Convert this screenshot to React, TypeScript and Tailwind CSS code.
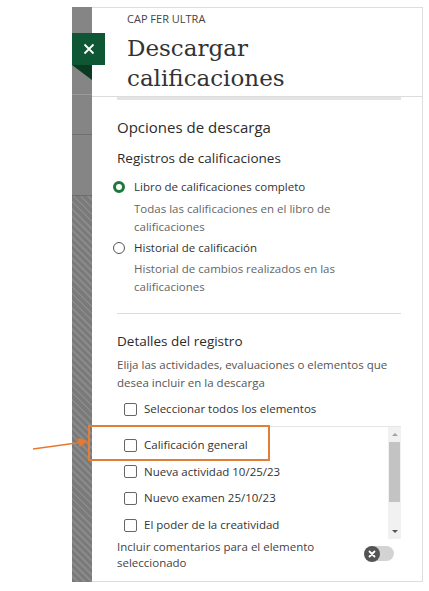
import React from 'react';

const items = [
  'Calificación general',
  'Nueva actividad 10/25/23',
  'Nuevo examen 25/10/23',
  'El poder de la creatividad',
];

function Radio({ checked }: { checked?: boolean }) {
  if (checked) {
    return <span className="block w-[12px] h-[12px] rounded-full border-[3.5px] border-[#1a7a3c] bg-white shrink-0" />;
  }
  return <span className="block w-[12px] h-[12px] rounded-full border-[1.5px] border-[#555] bg-white shrink-0" />;
}

function Checkbox() {
  return <span className="block w-[13px] h-[13px] rounded-[2px] border-[1.5px] border-[#666] bg-white shrink-0" />;
}

export default function App() {
  return (
    <div className="relative w-[429px] h-[591px] bg-white font-['Open_Sans',sans-serif] text-[#333]">
      <div className="flex pt-[7px] pl-[72px] pr-[6px] h-[582px]">
        {/* background strip of the page behind the panel */}
        <div className="w-[20px] flex flex-col bg-[#858585]">
          <div className="h-[88px] border-b border-[#9a9a9a]" />
          <div className="h-[40px] border-b border-[#6f6f6f]" />
          <div className="h-[61px] border-b border-[#6c6c6c]" />
          <div className="flex-1 bg-[repeating-linear-gradient(45deg,#7a7a7a_0,#7a7a7a_3px,#8a8a8a_3px,#8a8a8a_5px)]" />
        </div>

        <div className="flex-1 flex flex-col border-t border-r border-b border-[#dedede] bg-white">
          <div className="pl-[35px] pt-[4px] pb-[3px] border-b border-[#dcdcdc]">
            <div className="text-[11px] leading-[14px] text-[#444] uppercase">CAP FER ULTRA</div>
            <h1 className="mt-[7px] font-['DejaVu_Serif',serif] text-[23px] leading-[30px] text-[#333]">
              Descargar
              <br />
              calificaciones
            </h1>
          </div>
          <div className="ml-[25px] mr-[21px] h-[3px] bg-[#e4e4e4]" />

          <div className="pl-[25px] pr-[21px]">
            <h2 className="mt-[16px] text-[15px] leading-[22px] text-[#2b2b2b]">Opciones de descarga</h2>
            <h3 className="mt-[10px] text-[13.5px] leading-[20px] text-[#2b2b2b]">Registros de calificaciones</h3>

            <div className="mt-[10px] flex items-center gap-[9px] -ml-[4px]">
              <Radio checked />
              <span className="text-[11.5px] leading-[18px] text-[#333]">Libro de calificaciones completo</span>
            </div>
            <p className="mt-[4px] pl-[17px] text-[11.5px] leading-[18px] text-[#666] pr-[40px]">
              Todas las calificaciones en el libro de calificaciones
            </p>
            <div className="mt-[3px] flex items-center gap-[9px] -ml-[4px]">
              <Radio />
              <span className="text-[11.5px] leading-[18px] text-[#333]">Historial de calificación</span>
            </div>
            <p className="mt-[3px] pl-[17px] text-[11.5px] leading-[18px] text-[#666] pr-[40px]">
              Historial de cambios realizados en las calificaciones
            </p>

            <div className="mt-[17px] h-px bg-[#dcdcdc]" />

            <h3 className="mt-[17px] text-[13.5px] leading-[20px] text-[#2b2b2b]">Detalles del registro</h3>
            <p className="mt-[5px] text-[11.5px] leading-[18px] text-[#555]">
              Elija las actividades, evaluaciones o elementos que desea incluir en la descarga
            </p>
            <div className="mt-[8px] pl-[7px] flex items-center gap-[7px]">
              <Checkbox />
              <span className="text-[11.5px] leading-[18px] text-[#333]">Seleccionar todos los elementos</span>
            </div>

            <div className="mt-[8px] flex h-[113px] border-t border-[#e6e6e6]">
              <div className="flex-1 pt-[5px] overflow-hidden">
                {items.map((t) => (
                  <div key={t} className="h-[26.6px] pl-[7px] flex items-center gap-[7px]">
                    <Checkbox />
                    <span className="text-[11.5px] leading-[18px] text-[#333]">{t}</span>
                  </div>
                ))}
              </div>
              <div className="w-[13px] bg-[#f1f1f1] flex flex-col items-center pt-[6px] pb-[6px]">
                <span className="block w-0 h-0 border-l-[3px] border-r-[3px] border-b-[3px] border-l-transparent border-r-transparent border-b-[#a3a3a3]" />
                <div className="mt-[6px] w-[11px] h-[60px] bg-[#c3c3c3]" />
                <div className="flex-1" />
                <span className="block w-0 h-0 border-l-[3px] border-r-[3px] border-t-[3px] border-l-transparent border-r-transparent border-t-[#555]" />
              </div>
            </div>

            <div className="flex items-start justify-between">
              <p className="w-[215px] text-[11.5px] leading-[16px] text-[#444]">
                Incluir comentarios para el elemento seleccionado
              </p>
              <div className="mt-[7px] mr-[7px] relative w-[29px] h-[15px] rounded-full bg-[#d3d3d3]">
                <span className="absolute -left-[1px] -top-[0.5px] w-[16px] h-[16px] rounded-full bg-[#545454] flex items-center justify-center">
                  <svg width="8" height="8" viewBox="0 0 8 8">
                    <path d="M1.5 1.5l5 5M6.5 1.5l-5 5" stroke="#fff" strokeWidth="1.8" strokeLinecap="round" />
                  </svg>
                </span>
              </div>
            </div>
          </div>
        </div>
      </div>

      {/* close tab */}
      <button className="absolute left-[72px] top-[33px] w-[33px] h-[32px] bg-[#0f5634] flex items-center justify-center">
        <svg width="12" height="12" viewBox="0 0 12 12">
          <path d="M1.5 1.5l9 9M10.5 1.5l-9 9" stroke="#fff" strokeWidth="1.8" />
        </svg>
      </button>
      <svg className="absolute left-[72px] top-[65px]" width="20" height="15" viewBox="0 0 20 15">
        <polygon points="0,0 20,0 20,15" fill="#0a3a22" />
      </svg>

      {/* annotation */}
      <div className="absolute left-[88px] top-[425px] w-[182px] h-[36px] border-2 border-[#e07f35]" />
      <svg className="absolute left-0 top-[430px]" width="92" height="26" viewBox="0 0 92 26">
        <line x1="33" y1="19" x2="80" y2="12.5" stroke="#e8792c" strokeWidth="1.6" />
        <polygon points="88,11 78,8 79.5,17" fill="#e8792c" />
      </svg>
    </div>
  );
}
